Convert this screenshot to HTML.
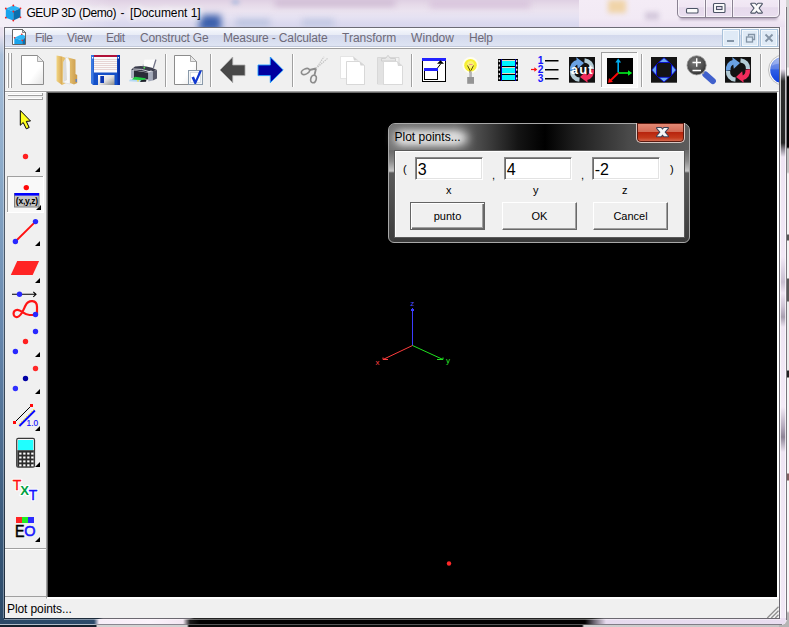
<!DOCTYPE html>
<html>
<head>
<meta charset="utf-8">
<title>GEUP 3D (Demo) - [Document 1]</title>
<style>
html,body{margin:0;padding:0;}
body{width:789px;height:627px;overflow:hidden;position:relative;background:#000;font-family:"Liberation Sans",sans-serif;font-size:12px;color:#000;}
.abs{position:absolute;}
#bgtop{left:0;top:0;width:789px;height:28px;background:linear-gradient(180deg,#dfd0e3 0,#e6dae9 5px,#ebe3f0 11px,#e6e2f2 17px,#dcdaef 23px,#d8d6ec 28px);}
#bgtop2{left:579px;top:0;width:208px;height:28px;background:linear-gradient(180deg,#f4ecf6 0,#f2eaf5 18px,#eadff0 28px);}
#bgtop3{left:0;top:0;width:110px;height:28px;background:linear-gradient(90deg,#f3eef6 0,#f1ebf5 40px,rgba(241,235,245,0) 100%);}
#outR{left:786px;top:0;width:3px;height:627px;background:linear-gradient(180deg,#d4d4d4 0px,#d4d4d4 67px,#f0f0f0 68px,#f0f0f0 75px,#000 77px,#000 147px,#c4c4c4 149px,#c4c4c4 172px,#f4f4f4 174px,#f4f4f4 234px,#555 235px,#555 240px,#f4f4f4 241px,#f4f4f4 278px,#5a5a5a 279px,#5a5a5a 301px,#ececec 302px,#ececec 370px,#222 371px,#222 377px,#f6f6f6 378px,#f6f6f6 473px,#806060 474px,#806060 480px,#f8f8f8 481px,#f8f8f8 611px,#b4b4b4 613px,#b4b4b4 627px);}
#outB{left:0;top:625px;width:789px;height:2px;background:linear-gradient(90deg,#14202c 0,#14202c 96px,#d2d2d2 97px,#d2d2d2 187px,#0a0a0a 189px,#0a0a0a 582px,#cfcfcf 584px,#c4c4c4 100%);}
#lframe{left:0;top:27px;width:5px;height:598px;
 background:linear-gradient(180deg,#eae2ef 0px,#e6e0ee 8px,#a9c0da 28px,#8aa9c8 150px,#6586ac 310px,#3b5b7d 490px,#2a4866 598px);}
#lframe i{position:absolute;left:3px;top:0;width:1px;height:100%;background:rgba(255,255,255,.35);}
#lframe b{position:absolute;left:4px;top:0;width:1px;height:592px;background:linear-gradient(180deg,#6b6b74 0,#4a5868 40%,#1c2a3a 100%);}
#rframe{left:779px;top:27px;width:8px;height:598px;border-radius:0 0 6px 0;
 background:linear-gradient(180deg,#ede4f2 0,#ebe1f1 42px,#8a8590 48px,#2e2e2e 54px,#262626 116px,#8a8590 122px,#eee4f3 130px,#f1e8f5 230px,#d8cfe0 245px,#c8bed0 255px,#efe6f4 266px,#cdc2d4 280px,#a89fb0 290px,#eee5f3 300px,#f3eaf6 380px,#b4aabd 400px,#8d8496 410px,#eee5f3 425px,#f1e8f5 100%);}
#rframe i{position:absolute;left:0;top:0;width:1px;height:592px;background:#6b6870;}
#rframe b{position:absolute;left:1px;top:0;width:1px;height:592px;background:rgba(255,255,255,.75);}
#rframe u{position:absolute;left:6px;top:0;width:1px;height:594px;background:rgba(255,255,255,.7);}
#rframe s{position:absolute;left:7px;top:0;width:1px;height:593px;background:#77747c;}
#bframe{left:0;top:618px;width:786px;height:7px;border-radius:0 0 6px 0;
 background:linear-gradient(90deg,#2a4866 0,#2c4a6a 94px,#f6ecf7 99px,#fbf2fb 150px,#f3e6f2 183px,#1a1a1a 190px,#000 200px,#000 585px,#6a6470 594px,#e6daee 606px,#e9ddf0 100%);}
#bframe i{position:absolute;left:4px;top:0;width:776px;height:1px;background:linear-gradient(90deg,#1c2a3a 0,#1c2a3a 94px,#6b6870 99px,#6b6870 186px,#222 190px,#222 588px,#6b6870 600px,#6b6870 100%);}
#bframe b{position:absolute;left:4px;top:1px;width:777px;height:1px;background:rgba(255,255,255,.4);}
#bframe u{position:absolute;left:0;top:6px;width:782px;height:1px;background:linear-gradient(90deg,#b0bcc8 0,#b0bcc8 94px,#8a8690 99px,#8a8690 186px,#555 190px,#555 588px,#807c86 600px,#807c86 100%);}
.smudge{position:absolute;filter:blur(3px);}
#title{left:26.400px;top:5px;font-size:12px;line-height:16px;letter-spacing:-.11px;white-space:nowrap;color:#000;text-shadow:0 0 6px #fff,0 0 8px #fff,0 0 10px #fff;}
#client{left:5px;top:28px;width:774px;height:590px;background:#f0f0f0;}
#ctop{left:4px;top:27px;width:776px;height:1px;background:#6b6b74;}
#menubar{left:5px;top:28px;width:774px;height:19px;background:linear-gradient(180deg,#fdfdfe 0,#f0f3fa 3px,#e8ecf6 7px,#d3d9ed 7.500px,#d9dff0 13px,#dee4f3 18px,#c2c9da 18px,#c2c9da 19px);}
.mi{position:absolute;top:31px;font-size:12px;line-height:14px;color:#6e6a78;white-space:nowrap;}
#tbsep{left:5px;top:47px;width:774px;height:2px;background:#fff;border-bottom:1px solid #a0a0a0;box-sizing:border-box;}
#toolbar{left:5px;top:49px;width:774px;height:42px;background:#f0f0f0;}
#canvas{left:48px;top:93px;width:729px;height:504px;background:#000;}
#mdiedge{left:46px;top:91px;width:733px;height:508px;box-sizing:border-box;border:1px solid;border-color:#a0a0a0 #fff #fff #a0a0a0;background:#696969;box-shadow:inset -1px -1px 0 #fff;}
#status{left:5px;top:599px;width:774px;height:19px;background:#f0f0f0;}
#statustxt{left:7px;top:602px;font-size:12px;line-height:14px;letter-spacing:-.1px;white-space:nowrap;}
#lefttb{left:5px;top:92px;width:41px;height:505px;background:#f0f0f0;}

#dlg{left:388px;top:123px;width:302px;height:120px;border-radius:7px 7px 6px 6px;box-sizing:border-box;border:1px solid #a8a8a8;overflow:hidden;
 background:linear-gradient(180deg,#6c6c6c 0,#6a6a6a 27px,#8a8a8a 37px,#c6c6c6 47px,#5a5a5a 49px,#3c3c3c 100%);box-shadow:0 0 0 1px #000;}
#dlgtb{left:389px;top:124px;width:300px;height:26px;border-radius:6px 6px 0 0;background:linear-gradient(90deg,#747474 0,#6a6a6a 22%,#3a3a3a 34%,#141414 43%,#000 52%,#1e1e1e 62%,#4a4a4a 80%,#5c5c5c 100%);}
#dlgbot{left:394px;top:238px;width:291px;height:4px;background:#3a3a3a;}
#dlgglow{left:394px;top:131px;width:74px;height:14px;background:#e0e0e0;filter:blur(5px);border-radius:7px;}
#dlgglow2{left:398px;top:133px;width:62px;height:10px;background:#dcdcdc;filter:blur(3px);border-radius:5px;}
#dlgtitle{left:394.500px;top:129px;font-size:12px;line-height:16px;letter-spacing:.01px;white-space:nowrap;}
#dlgclose{left:636px;top:123px;width:49px;height:20px;box-sizing:border-box;border:1px solid #d8c8c4;border-top:none;border-radius:0 0 5px 5px;
 background:linear-gradient(180deg,#e48c78 0,#d26a54 47%,#b8250e 50%,#c43a1c 78%,#d8735a 100%);box-shadow:inset 0 0 0 1px #5a1a10;}
#dlgclient{left:394px;top:150px;width:291px;height:88px;box-sizing:border-box;border:1px solid #5a5a5a;background:#f0f0f0;box-shadow:inset 1px 1px 0 #fff;}
.edit{position:absolute;top:157px;width:68px;height:23px;box-sizing:border-box;background:#fff;border:1px solid;border-color:#8a8a8a #fff #fff #8a8a8a;box-shadow:inset 1px 1px 0 #6a6a6a,inset -1px -1px 0 #e3e3e3;font-size:16px;line-height:19px;padding:2px 0 0 1.700px;}
.dl{position:absolute;font-size:11px;line-height:12px;white-space:nowrap;}
.btn{position:absolute;top:202px;width:75px;height:28px;box-sizing:border-box;background:#f0f0f0;border:1px solid;border-color:#fff #696969 #696969 #fff;box-shadow:inset -1px -1px 0 #a0a0a0;font-size:11px;line-height:27px;text-align:center;}
.btn.def{top:202px;height:28px;border-color:#646464;box-shadow:inset 1px 1px 0 #fff,inset -1px -1px 0 #696969,inset -2px -2px 0 #a0a0a0;line-height:27px;}
</style>
</head>
<body>
<div class="abs" id="bgtop"></div>
<div class="abs" id="bgtop2"></div>
<div class="abs" id="bgtop3"></div>
<div class="smudge" style="left:199px;top:15px;width:22px;height:16px;background:#3c60ac;filter:blur(3.500px)"></div>
<div class="smudge" style="left:236px;top:19px;width:34px;height:8px;background:#bcc4e0"></div>
<div class="smudge" style="left:302px;top:19px;width:32px;height:8px;background:#c2c8e2"></div>
<div class="smudge" style="left:275px;top:0px;width:120px;height:6px;background:#cdb8d2"></div>
<div class="smudge" style="left:430px;top:0px;width:100px;height:8px;background:#d8c4dc"></div>
<div class="smudge" style="left:232px;top:0px;width:7px;height:4px;background:#a8b8dc;filter:blur(2px)"></div>
<div class="smudge" style="left:608px;top:0px;width:18px;height:13px;background:#f0d4a8;filter:blur(2.500px)"></div>
<div class="smudge" style="left:645px;top:12px;width:14px;height:8px;background:#d4c8dc;filter:blur(2.500px)"></div>
<div class="abs" id="outR"></div>
<div class="abs" id="outB"></div>
<div class="abs" style="left:779px;top:617px;width:10px;height:10px;background:#b4b4b4"></div>
<div class="abs" style="left:785px;top:7px;width:1px;height:20px;background:rgba(255,255,255,.7)"></div><div class="abs" style="left:786px;top:7px;width:1px;height:20px;background:#77747c"></div>
<div class="abs" id="lframe"><i></i><b></b></div>
<div class="abs" id="rframe"><i></i><b></b><u></u><s></s></div>
<div class="abs" id="bframe"><i></i><b></b><u></u></div>
<div class="abs" id="title"><span id="t1" style="letter-spacing:-.44px">GEUP 3D (Demo)</span><span id="t2" style="letter-spacing:1.050px"> - </span><span id="t3" style="letter-spacing:-.06px">[Document 1]</span></div>
<div class="abs" id="client"></div>
<div class="abs" id="ctop"></div>
<div class="abs" id="menubar"></div>
<div class="mi" style="left:35px;letter-spacing:-.5px">File</div>
<div class="mi" style="left:67px;letter-spacing:-.27px">View</div>
<div class="mi" style="left:106px;letter-spacing:-.57px">Edit</div>
<div class="mi" style="left:140px;letter-spacing:-.19px">Construct Ge</div>
<div class="mi" style="left:223px;letter-spacing:-.15px">Measure - Calculate</div>
<div class="mi" style="left:342px">Transform</div>
<div class="mi" style="left:411px;letter-spacing:.07px">Window</div>
<div class="mi" style="left:469px;letter-spacing:-.25px">Help</div>
<svg class="abs" id="topicons" style="left:0;top:0" width="789" height="48" viewBox="0 0 789 48">
<defs>
<linearGradient id="gCap" x1="0" y1="0" x2="0" y2="1"><stop offset="0" stop-color="#f3ebf6"/><stop offset=".45" stop-color="#efe5f3"/><stop offset=".5" stop-color="#e6daec"/><stop offset="1" stop-color="#eadff0"/></linearGradient>
<filter id="fb" x="-20%" y="-50%" width="140%" height="200%"><feGaussianBlur stdDeviation="1.600"/></filter>
</defs>
<!-- app cube -->
<path d="M13.300 5.500 L20.500 8.300 L13.300 11.500 L5.800 8.500 Z" fill="#2cb6f6"/>
<path d="M5.800 8.500 L13.300 11.500 V20.500 L5.800 17.700 Z" fill="#1aa4ec"/>
<path d="M13.300 11.500 L20.500 8.300 V17.300 L13.300 20.500 Z" fill="#0a6eae"/>
<g fill="#f02020"><circle cx="13.300" cy="5.500" r=".9"/><circle cx="5.800" cy="8.500" r=".9"/><circle cx="20.500" cy="8.300" r=".9"/><circle cx="13.300" cy="11.500" r=".9"/><circle cx="5.800" cy="17.700" r=".9"/><circle cx="20.500" cy="17.300" r=".9"/><circle cx="13.300" cy="20.500" r=".9"/></g>
<!-- mdi doc icon -->
<path d="M12.500 29.500 H22.500 L25.500 32.500 V44.500 H12.500 Z" fill="#fff" stroke="#555" stroke-width=".9" stroke-linejoin="miter"/>
<path d="M22.500 29.500 V32.500 H25.500 Z" fill="#dcdcdc" stroke="#555" stroke-width=".7"/>
<path d="M14.300 37.800 L21.800 34.300 L25 35.800 V37.500 L22.200 40.400 Z" fill="#2cb6f6"/>
<path d="M14.300 37.800 L22.200 40.400 V44 H14.300 Z" fill="#1aa4ec"/>
<path d="M22.200 40.400 L25 37.500 V44 H22.200 Z" fill="#0a6eae"/>
<g fill="#f02020"><circle cx="21.800" cy="34.300" r=".8"/><circle cx="14.600" cy="37.800" r=".8"/><circle cx="22.200" cy="40.400" r=".8"/></g>
<!-- caption buttons shadow -->
<path d="M680 15 H777 V19.500 H680 Z" fill="#8e7c9a" opacity=".7" filter="url(#fb)"/>
<path d="M677.500 -2 V13 Q677.500 17.500 682 17.500 H775 Q779.500 17.500 779.500 13 V-2 Z" fill="url(#gCap)" stroke="#8a8292" stroke-width="1"/>
<path d="M678.500 -2 V13 Q678.500 16.500 682 16.500 H775 Q778.500 16.500 778.500 13 V-2" fill="none" stroke="#fff" stroke-opacity=".6" stroke-width="1"/>
<path d="M705.500 0 V17 M732.500 0 V17" stroke="#8a8292" stroke-width="1"/>
<path d="M704.500 0 V16 M706.500 0 V16 M731.500 0 V16 M733.500 0 V16" stroke="#fff" stroke-opacity=".55" stroke-width="1"/>
<!-- min -->
<rect x="686.500" y="8.500" width="11.500" height="4.500" rx="1" fill="#fbfbfb" stroke="#4c5466" stroke-width="1.100"/>
<!-- max -->
<rect x="713.500" y="3.500" width="11.500" height="9" rx="1" fill="#fbfbfb" stroke="#4c5466" stroke-width="1.100"/>
<rect x="716.500" y="6.500" width="5.500" height="3" fill="#e6dcee" stroke="#4c5466" stroke-width="1.100"/>
<!-- close -->
<g stroke="#4c5466" stroke-width="2.200" stroke-linejoin="round" fill="#4c5466"><path d="M751.300 3.800 H755 L761.800 12.600 H758.100 Z"/><path d="M761.800 3.800 H758.100 L751.300 12.600 H755 Z"/></g>
<g fill="#fbfbfb"><path d="M751.300 3.800 H755 L761.800 12.600 H758.100 Z"/><path d="M761.800 3.800 H758.100 L751.300 12.600 H755 Z"/></g>
<!-- MDI buttons -->
<g>
<rect x="722.500" y="29.500" width="17" height="17" fill="#dfeaf6" stroke="#a9c2da"/><rect x="741.500" y="29.500" width="17" height="17" fill="#dfeaf6" stroke="#a9c2da"/><rect x="760.500" y="29.500" width="17" height="17" fill="#dfeaf6" stroke="#a9c2da"/>
<rect x="723.500" y="30.500" width="15" height="15" fill="none" stroke="#f4f8fc"/><rect x="742.500" y="30.500" width="15" height="15" fill="none" stroke="#f4f8fc"/><rect x="761.500" y="30.500" width="15" height="15" fill="none" stroke="#f4f8fc"/>
<rect x="727" y="40" width="7" height="2" fill="#8494a6"/>
<path d="M748.500 36.500 V34.500 H754.500 V39.500 H752.500" fill="none" stroke="#8494a6" stroke-width="1.300"/>
<rect x="746.500" y="37" width="6" height="5" fill="none" stroke="#8494a6" stroke-width="1.300"/>
<path d="M765.500 34.500 L772.500 41.500 M772.500 34.500 L765.500 41.500" stroke="#8494a6" stroke-width="1.800"/>
</g>
</svg>
<div class="abs" id="tbsep"></div>
<div class="abs" id="toolbar"></div>
<svg class="abs" id="tbicons" style="left:0;top:49px" width="779" height="43" viewBox="0 49 779 43">
<defs>
<linearGradient id="gPaper" x1="0" y1="0" x2="1" y2="1"><stop offset="0" stop-color="#fff"/><stop offset=".6" stop-color="#fff"/><stop offset="1" stop-color="#e4e4e4"/></linearGradient>
<linearGradient id="gFold" x1="0" y1="0" x2="1" y2="0"><stop offset="0" stop-color="#f2d684"/><stop offset="1" stop-color="#d9a954"/></linearGradient>
<linearGradient id="gFold2" x1="0" y1="0" x2="1" y2="0"><stop offset="0" stop-color="#e9c472"/><stop offset="1" stop-color="#c99a4c"/></linearGradient>
<linearGradient id="gShut" x1="0" y1="0" x2="1" y2="1"><stop offset="0" stop-color="#fff"/><stop offset=".5" stop-color="#e0e0e0"/><stop offset="1" stop-color="#8a8a8a"/></linearGradient>
<radialGradient id="gLens" cx=".4" cy=".35" r=".7"><stop offset="0" stop-color="#7a7a7a"/><stop offset=".7" stop-color="#4a4a4a"/><stop offset="1" stop-color="#2a2a2a"/></radialGradient>
<linearGradient id="gSph" x1="0" y1="0" x2="0" y2="1"><stop offset="0" stop-color="#8aa4ec"/><stop offset=".45" stop-color="#5a7ee6"/><stop offset=".5" stop-color="#2f5fe4"/><stop offset="1" stop-color="#0a3ce0"/></linearGradient>
</defs>
<!-- grip -->
<g shape-rendering="crispEdges">
<rect x="7" y="53" width="1" height="35" fill="#fff"/><rect x="8" y="53" width="1" height="35" fill="#a0a0a0"/>
<rect x="10" y="53" width="1" height="35" fill="#fff"/><rect x="11" y="53" width="1" height="35" fill="#a0a0a0"/>
<!-- separators -->
<g fill="#a0a0a0"><rect x="165" y="54" width="1" height="33"/><rect x="210" y="54" width="1" height="33"/><rect x="292" y="54" width="1" height="33"/><rect x="411" y="54" width="1" height="33"/><rect x="641" y="54" width="1" height="33"/><rect x="760" y="54" width="1" height="33"/></g>
<g fill="#fff"><rect x="166" y="54" width="1" height="33"/><rect x="211" y="54" width="1" height="33"/><rect x="293" y="54" width="1" height="33"/><rect x="412" y="54" width="1" height="33"/><rect x="642" y="54" width="1" height="33"/><rect x="761" y="54" width="1" height="33"/></g>
</g>
<!-- new doc -->
<path d="M21.5 55.5 H37.5 L43.5 61.5 V84.5 H21.5 Z" fill="url(#gPaper)" stroke="#8c8c8c" stroke-width="1"/>
<path d="M37.5 55.5 V61.5 H43.5 Z" fill="#e8e8e8" stroke="#9a9a9a" stroke-width=".8"/>
<!-- folder -->
<path d="M56.5 55.5 L62 56.5 L62 85 L56.5 81 Z" fill="url(#gFold)"/>
<path d="M62 56.5 L66 58 V83 L62 85 Z" fill="#e6c06c"/>
<path d="M63.500 62 L66.500 57 L70 60.500 V84 L63 82.500 Z" fill="#f8f8f8" stroke="#d0d0d0" stroke-width=".5"/>
<path d="M63.5 62 L66 58 L67 80 L63.5 82 Z" fill="#dcdcdc"/>
<path d="M68 57.5 L75.5 59.5 V74 L77.2 75 V83 L74 84.5 L70 83 V62 Z" fill="url(#gFold2)"/>
<rect x="75.6" y="79" width="1.2" height="3" fill="#4a7ae0"/>
<!-- floppy -->
<path d="M91 55 H120 V85 H93 L91 83 Z" fill="#1450c8"/>
<path d="M91 55 H93.5 V84.5 L91 83 Z" fill="#3a78e0"/>
<rect x="117.500" y="55" width="2.5" height="30" fill="#0a34a8"/>
<rect x="94" y="55" width="23" height="17.500" fill="#fafafa"/>
<rect x="94" y="55" width="23" height="2" fill="#b01038"/>
<g stroke="#e2cccc" stroke-width=".8"><path d="M94 59.500H117M94 61.500H117M94 63.500H117M94 65.500H117M94 67.500H117M94 69.500H117"/></g>
<rect x="92" y="57" width="1.300" height="1.500" fill="#fff"/><rect x="117.700" y="57" width="1.300" height="1.500" fill="#fff"/>
<rect x="98" y="75" width="16.500" height="10" fill="url(#gShut)"/>
<rect x="100.300" y="76" width="3.700" height="7" fill="#0a34b0"/>
<!-- printer -->
<path d="M143.500 67 L144.300 59.700 L155 59.500 L153.800 68 Z" fill="#fdfdfd"/>
<path d="M155.800 60 L153.500 67.500" stroke="#74768a" stroke-width="1.300" stroke-linecap="round"/>
<path d="M143.200 66.800 V64.500" stroke="#9a9cb0" stroke-width=".8"/>
<path d="M131 69.800 L135 66.600 Q143 65 152 67.800 L157 70 L149 72.500 Z" fill="#3a3c4c"/>
<path d="M133 69 Q142 68.500 149 71.500" stroke="#d8dae2" stroke-width=".9" fill="none"/>
<path d="M131 69.800 L134 70.600 V78.500 L131 78 Z" fill="#aab0be"/>
<path d="M134 70.600 L148.500 72.800 V79.500 L134 78.500 Z" fill="#2a2c38"/>
<path d="M148.300 72.500 L152.800 71.300 V80.500 L148.300 81.500 Z" fill="#a4aaba"/>
<path d="M152.800 71.300 L157 70 V78.500 L152.800 80.500 Z" fill="#565868"/>
<path d="M148.300 72.500 L152.800 71.300 L151 70.500 L147 71.800 Z" fill="#e8eaf0"/>
<path d="M135 76.800 L146 78.200 L143.500 81 L131.500 79.800 Z" fill="#22cc44"/>
<path d="M130 79.300 L141 80.300 L140 82 L129 81.200 Z" fill="#b4d8f4"/>
<path d="M141 80.300 L146.500 79.500 L146 81.800 L140 82 Z" fill="#1c1e28"/>
<circle cx="138" cy="80.700" r="1" fill="#e8e060"/>
<circle cx="144.300" cy="67.700" r=".9" fill="#50e850"/>
<!-- doc + check -->
<path d="M174.500 55.500 H190.500 L196.500 61.500 V84.500 H174.500 Z" fill="url(#gPaper)" stroke="#8c8c8c"/>
<path d="M190.500 55.500 V61.500 H196.500 Z" fill="#e8e8e8" stroke="#9a9a9a" stroke-width=".8"/>
<rect x="188.500" y="70.500" width="14" height="14" fill="#f4f6f8" stroke="#8a9aaa"/>
<rect x="190.500" y="72.500" width="10" height="10" fill="#fff" stroke="#d0d8e0" stroke-width=".8"/>
<path d="M191.500 77.500 L194 76.500 L195.500 80 L199.500 70.500 L202 70.500 L196 84 L194.500 84 Z" fill="#1038d0"/>
<!-- back arrow -->
<path d="M220 70 L232.700 57 V65 H245 V75.600 H232.700 V82.700 Z" fill="#484848" stroke="#a8a8a8" stroke-width=".8"/>
<!-- forward arrow -->
<path d="M283.200 70 L270.300 57 V65 H258 V75.600 H270.300 V82.700 Z" fill="#0000a0" stroke="#1e9cff" stroke-width=".9"/>
<!-- scissors -->
<g fill="none" stroke="#8c8c8c">
<ellipse cx="305.500" cy="71.500" rx="4.300" ry="2.600" transform="rotate(-25 305.500 71.500)" stroke-width="1.600"/>
<ellipse cx="313.500" cy="79" rx="2.700" ry="3.800" transform="rotate(15 313.500 79)" stroke-width="1.600"/>
<path d="M309.500 70 L316 68.500 M314.500 75 L316 68.500" stroke-width="1.800"/>
<path d="M316 68.500 L324 56.800 M316 68.500 L327.500 58.500" stroke="#c4c4c4" stroke-width="1.100" stroke-dasharray="1.500 .8"/>
</g>
<!-- copy -->
<path d="M340.500 56.500 H353 L358 60.500 V78.500 H340.500 Z" fill="#fff" stroke="#dcdcdc" stroke-width=".7"/>
<path d="M346.500 61.500 H359.500 L364.500 65.500 V84.500 H346.500 Z" fill="#fff" stroke="#cfcfcf" stroke-width=".8"/>
<path d="M353 56.500 L358 60.500 H354 Z M359.500 61.500 L364.500 65.500 H360.500Z" fill="#d4d4d4"/>
<!-- paste -->
<path d="M377.500 57.500 H399 V84 H377.500 Z" fill="#f2f2f2" stroke="#d2d2d2" stroke-width=".8"/>
<rect x="378" y="58" width="5" height="25.500" fill="#e2e2e2"/>
<path d="M381.500 61 V58.500 H385.500 L388 55.300 L390.500 58.500 H395.500 V61 Z" fill="#e8e8e8" stroke="#c8c8c8" stroke-width=".8"/>
<path d="M383.500 61.500 H397 L402.500 66 V84.500 H383.500 Z" fill="#fff" stroke="#d2d2d2" stroke-width=".8"/>
<path d="M397 61.500 L402.500 66 H398 Z" fill="#d8d8d8"/>
<!-- window icon -->
<g shape-rendering="crispEdges">
<rect x="422.500" y="58.500" width="23" height="23" fill="#fff" stroke="#000" stroke-width="1"/>
<rect x="422" y="58" width="24" height="3" fill="#2222ff"/>
<rect x="424.500" y="68.500" width="13" height="11" fill="#fff" stroke="#000"/>
<rect x="424" y="68" width="14" height="3" fill="#2222ff"/>
</g>
<path d="M437.500 68 L441 63.500" stroke="#000" stroke-width="1"/>
<path d="M437 63.800 L440.500 60.200 L444 63.800 Z" fill="#000"/>
<!-- bulb -->
<circle cx="470.500" cy="65.300" r="8.200" fill="#fffef0"/>
<circle cx="470.500" cy="65.300" r="6.300" fill="#f7ef34"/>
<circle cx="470.500" cy="64.500" r="3.500" fill="#fbf79a" opacity=".6"/>
<path d="M467.500 65.500 L470 70.500 V73 M473.500 65.500 L471 70.500" stroke="#504000" stroke-width=".9" fill="none"/>
<path d="M469 64.500 H472.500" stroke="#f09090" stroke-width="1"/>
<rect x="469.300" y="71.500" width="2.600" height="6" fill="#b4b4b4"/>
<rect x="467.200" y="77" width="6.800" height="6.800" fill="#949494"/>
<!-- film -->
<g shape-rendering="crispEdges">
<rect x="498" y="59" width="20" height="22" fill="#000"/>
<rect x="501" y="60" width="14" height="20" fill="#e8d8c4"/>
<rect x="501" y="60.500" width="14" height="5" fill="#00f6ff"/><rect x="501" y="67.500" width="14" height="5.500" fill="#00f6ff"/><rect x="501" y="75" width="14" height="5" fill="#00f6ff"/>
<rect x="501" y="66" width="14" height="1" fill="#000"/><rect x="501" y="73.500" width="14" height="1" fill="#000"/>
<rect x="500.500" y="59" width="1" height="22" fill="#0000c0"/><rect x="514.500" y="59" width="1" height="22" fill="#0000c0"/>
</g>
<g fill="#fff"><rect x="498.700" y="60" width="1.200" height="2.200" rx=".6"/><rect x="498.700" y="64.300" width="1.200" height="2.200" rx=".6"/><rect x="498.700" y="68.600" width="1.200" height="2.200" rx=".6"/><rect x="498.700" y="72.900" width="1.200" height="2.200" rx=".6"/><rect x="498.700" y="77.200" width="1.200" height="2.200" rx=".6"/>
<rect x="516.100" y="60" width="1.200" height="2.200" rx=".6"/><rect x="516.100" y="64.300" width="1.200" height="2.200" rx=".6"/><rect x="516.100" y="68.600" width="1.200" height="2.200" rx=".6"/><rect x="516.100" y="72.900" width="1.200" height="2.200" rx=".6"/><rect x="516.100" y="77.200" width="1.200" height="2.200" rx=".6"/></g>
<!-- 123 list -->
<g font-family="Liberation Sans, sans-serif" font-weight="bold" font-size="10.200px" fill="#1414ff">
<text x="537.800" y="64.400">1</text><text x="537.800" y="73.400">2</text><text x="537.800" y="82.400">3</text></g>
<g stroke="#000" stroke-width="1.400"><path d="M545 60.700 H558.500 M545 69.700 H558.500 M545 78.700 H558.500"/></g>
<path d="M531 69.500 H536" stroke="#ff1010" stroke-width="1.200"/><path d="M534.300 67.300 L537.300 69.500 L534.300 71.700 Z" fill="#ff1010"/>
<!-- aut icon -->
<rect x="569" y="57" width="26" height="25.700" fill="#121212"/>
<g id="cyc" fill="none" stroke-linecap="butt">
<path d="M584.500 60.300 C589.500 60.800 592.200 64.500 592 69" stroke="#b4ccd6" stroke-width="4.200"/>
<path d="M579.500 79.700 C574.500 79.200 571.800 75.500 572 71" stroke="#b4ccd6" stroke-width="4.200"/>
<path d="M572.300 70.500 C571.800 66 574 62.700 578 62" stroke="#6aa2e4" stroke-width="4.600"/>
<path d="M576.300 57.300 L584 63 L577.800 68.800 Z" fill="#6aa2e4" stroke="none"/>
<path d="M591.700 69.500 C592.200 74 590 77.300 586 78" stroke="#f02c5c" stroke-width="4.600"/>
<path d="M587.700 82.700 L580 77 L586.200 71.200 Z" fill="#f02c5c" stroke="none"/>
</g>
<text x="570.800" y="73.700" font-family="Liberation Sans, sans-serif" font-weight="bold" font-size="13px" fill="#fff" letter-spacing="1.100">aut</text>
<!-- axes pressed button -->
<rect x="601" y="52" width="37" height="36" fill="#f9f9f9"/>
<g shape-rendering="crispEdges"><rect x="601" y="52" width="37" height="1" fill="#a0a0a0"/><rect x="601" y="52" width="1" height="36" fill="#a0a0a0"/><rect x="601" y="87" width="37" height="1" fill="#fff"/><rect x="637" y="52" width="1" height="36" fill="#fff"/>
<rect x="607" y="58" width="26" height="25.700" fill="#000"/></g>
<path d="M618.200 72.500 V61" stroke="#00aef0" stroke-width="1.600"/><path d="M615.300 62.500 L618.200 58.500 L621.100 62.500 Z" fill="#00aef0"/>
<path d="M618 73 H629" stroke="#00f020" stroke-width="1.600"/><path d="M628 70.200 L632.200 73 L628 75.800 Z" fill="#00f020"/>
<path d="M618.200 73 L610.500 80.500" stroke="#ff0808" stroke-width="1.800"/><path d="M608 82.800 L609 78 L613 82 Z" fill="#ff0808"/>
<!-- blue arrows icon -->
<rect x="651" y="57" width="26" height="25.700" fill="#141414"/>
<g fill="#6aa8f0" stroke="#0000e0" stroke-width=".8">
<path d="M664 57.800 L669.500 62.500 H658.500 Z"/><path d="M664 82 L669.500 77.300 H658.500 Z"/>
<path d="M651.800 70 L656.500 64.500 V75.500 Z"/><path d="M676.200 70 L671.500 64.500 V75.500 Z"/>
</g>
<path d="M658.500 62.500 L656.500 64.500 M669.500 62.500 L671.500 64.500 M658.500 77.300 L656.500 75.500 M669.500 77.300 L671.500 75.500" stroke="#0000e0" stroke-width=".8"/>
<!-- zoom -->
<path d="M705.500 74.500 L712.800 81" stroke="#4060cc" stroke-width="6.200" stroke-linecap="round"/>
<path d="M700 70 L704 73.500" stroke="#a0a0a0" stroke-width="2"/>
<circle cx="696.600" cy="65.300" r="9.600" fill="url(#gLens)" stroke="#9a9a9a" stroke-width=".8"/>
<path d="M692.500 62.500 H701 M696.700 58.300 V66.700 M692.500 70.500 H701" stroke="#fff" stroke-width="1.400"/>
<!-- refresh icon -->
<rect x="725" y="57" width="26" height="25.700" fill="#121212"/>
<use href="#cyc" x="156" y="0"/>
<!-- sphere -->
<circle cx="783.500" cy="70" r="15" fill="#fafafa" stroke="#b0b0b0" stroke-width=".8"/><circle cx="783.500" cy="70" r="13.300" fill="url(#gSph)"/><path d="M771.500 66 A13 13 0 0 1 783 57.500 L783 63 Q775 64 771.500 66 Z" fill="#fff" opacity=".25"/>
</svg>
<div class="abs" style="left:5px;top:90px;width:774px;height:1px;background:#f8f8f8"></div>
<div class="abs" id="lefttb"></div>
<div class="abs" id="mdiedge"></div>
<div class="abs" id="canvas"></div>
<svg class="abs" id="ltbicons" style="left:5px;top:91px" width="43" height="507" viewBox="5 91 43 507">
<g shape-rendering="crispEdges">
<rect x="5" y="91" width="42" height="1" fill="#a0a0a0"/><rect x="5" y="92" width="42" height="1" fill="#fff"/>
<rect x="46" y="92" width="1" height="505" fill="#a0a0a0"/><rect x="47" y="92" width="1" height="505" fill="#696969"/>
<rect x="8" y="94" width="34" height="1" fill="#fff"/><rect x="8" y="95" width="35" height="1" fill="#a0a0a0"/><rect x="42" y="93" width="1" height="3" fill="#a0a0a0"/>
<rect x="8" y="98" width="34" height="1" fill="#fff"/><rect x="8" y="99" width="35" height="1" fill="#a0a0a0"/><rect x="42" y="97" width="1" height="3" fill="#a0a0a0"/>
<rect x="5" y="548" width="41" height="1" fill="#a0a0a0"/><rect x="5" y="549" width="41" height="1" fill="#fff"/>
<rect x="5" y="596" width="42" height="1" fill="#a0a0a0"/>
<!-- pressed button -->
<rect x="7" y="176" width="37" height="37" fill="#f9f9f9"/>
<rect x="7" y="176" width="37" height="1" fill="#a0a0a0"/><rect x="7" y="176" width="1" height="37" fill="#a0a0a0"/><rect x="7" y="212" width="37" height="1" fill="#fff"/><rect x="43" y="176" width="1" height="37" fill="#fff"/>
</g>
<!-- cursor -->
<path d="M20.300 110.500 V125.300 L23.200 122.500 L26.300 128.800 L29.200 127.500 L26.300 121.400 L30.500 121 Z" fill="#ffff20" stroke="#000" stroke-width="1" stroke-linejoin="miter"/>
<!-- dropdown triangles -->
<g fill="#000"><path d="M35 172 H40 V167 Z"/><path d="M36 210 H41 V205 Z"/><path d="M35 246 H40 V241 Z"/><path d="M35 283 H40 V278 Z"/><path d="M35 357 H40 V352 Z"/><path d="M35 394 H40 V389 Z"/><path d="M35 431 H40 V426 Z"/><path d="M35 467 H40 V462 Z"/><path d="M35 542 H40 V537 Z"/></g>
<!-- point -->
<circle cx="25.500" cy="156.500" r="2.700" fill="#ff2020"/>
<!-- xyz -->
<circle cx="26.300" cy="187.600" r="2.700" fill="#ff0808"/>
<rect x="14.500" y="193.500" width="24.500" height="13.500" fill="#c4c4c4" stroke="#808080" stroke-width="1"/>
<rect x="14.500" y="193" width="24.500" height="2.600" fill="#0000ff"/>
<text x="26.800" y="204.300" text-anchor="middle" font-family="Liberation Sans, sans-serif" font-weight="bold" font-size="8.500px" fill="#000" letter-spacing="-.2">(x,y,z)</text>
<!-- segment -->
<path d="M15.400 241.500 L35.500 221.600" stroke="#ff1010" stroke-width="1.900"/>
<circle cx="35.500" cy="221.600" r="2.700" fill="#2828ff"/><circle cx="15.400" cy="241.500" r="2.700" fill="#2828ff"/>
<!-- parallelogram -->
<path d="M17.200 261 H39.100 L32.700 275 H10.800 Z" fill="#ff2424"/>
<!-- arrow with point -->
<path d="M12 294.300 H36 M33.300 291.800 L36 294.300 L33.300 296.800" stroke="#000" stroke-width="1.100" fill="none"/>
<circle cx="19.500" cy="294.300" r="2.700" fill="#2828ff"/>
<!-- loop curve -->
<path d="M35.500 315 L37 314 V307 C37 299.500 28.500 299.500 25.500 305.500 C23.500 309.500 21.500 316 17.500 317 C12.500 318 12 309.500 17.500 309.800 C21.500 310 24 314.800 29.500 315 H35.500" fill="none" stroke="#ff1414" stroke-width="2.200" stroke-linejoin="round"/>
<circle cx="35.500" cy="314.500" r="2.700" fill="#2828ff"/>
<!-- 3 points -->
<circle cx="35.500" cy="331.500" r="2.700" fill="#2828ff"/><circle cx="25.500" cy="341.500" r="2.700" fill="#ff2020"/><circle cx="15.400" cy="351.500" r="2.700" fill="#2828ff"/>
<circle cx="35.500" cy="368.500" r="2.700" fill="#ff2828"/><circle cx="25.500" cy="378.500" r="2.700" fill="#0000a4"/><circle cx="15.400" cy="388.500" r="2.700" fill="#3030ff"/>
<!-- measure -->
<path d="M31.500 405.500 L14.500 422.500" stroke="#000" stroke-width="1"/>
<rect x="30" y="404" width="3" height="3" fill="#ff0808"/><rect x="13" y="421" width="3" height="3" fill="#ff0808"/>
<path d="M34 409.500 L18.500 425" stroke="#f8f000" stroke-width="1.200" stroke-dasharray="1.200 1.200"/>
<path d="M34.900 410.500 L19.400 426" stroke="#0808ff" stroke-width="1.800"/>
<text x="26.600" y="426" font-family="Liberation Sans, sans-serif" font-size="8.300px" fill="#1010ff" stroke="#1010ff" stroke-width=".15">1.0</text>
<!-- calculator -->
<rect x="16.700" y="438.400" width="17.800" height="28.800" rx="1.500" fill="#f4f4f4" stroke="#383838" stroke-width="1.200"/>
<rect x="18" y="440" width="15.200" height="10.200" fill="#20ffff"/>
<rect x="17.300" y="450.200" width="16.600" height=".9" fill="#383838"/>
<rect x="17.400" y="451" width="16.400" height="15.800" fill="#2c2c2c"/>
<g fill="#fff">
<g id="krow"><rect x="19.200" y="452.600" width="2.300" height="2"/><rect x="23.200" y="452.600" width="2.300" height="2"/><rect x="27.200" y="452.600" width="2.300" height="2"/><rect x="31.200" y="452.600" width="2.300" height="2"/></g>
<use href="#krow" y="3.900"/><use href="#krow" y="7.800"/><use href="#krow" y="11.700"/>
</g>
<!-- TXT -->
<g font-family="Liberation Sans, sans-serif" font-size="14px" stroke="#fff" stroke-width="2.400" stroke-linejoin="round" fill="#fff">
<text x="12.800" y="490.200">T</text><text x="20.300" y="494.700" font-weight="bold" font-size="13px">X</text><text x="28.800" y="500.200">T</text></g>
<g font-family="Liberation Sans, sans-serif" font-size="14px">
<text x="12.800" y="490.200" fill="#ff1010" stroke="#ff1010" stroke-width=".4">T</text><text x="20.300" y="494.700" fill="#00a040" font-weight="bold" font-size="13px">X</text><text x="28.800" y="500.200" fill="#1010ff" stroke="#1010ff" stroke-width=".4">T</text></g>
<!-- EO -->
<g shape-rendering="crispEdges"><rect x="16" y="517" width="6" height="6" fill="#ff2424"/><rect x="22" y="517" width="6" height="6" fill="#20f020"/><rect x="28" y="517" width="6" height="6" fill="#2c2cff"/></g>
<g font-family="Liberation Sans, sans-serif" font-size="16.500px">
<text x="15" y="537.200" fill="#000" stroke="#000" stroke-width=".55" textLength="9.500" lengthAdjust="spacingAndGlyphs">E</text></g>
<text x="24.200" y="536.300" font-family="Liberation Sans, sans-serif" font-size="14.200px" fill="#1a1aff" stroke="#1a1aff" stroke-width=".55" textLength="11.300" lengthAdjust="spacingAndGlyphs">O</text>
</svg>

<svg class="abs" id="axes" style="left:48px;top:92px" width="729" height="505" viewBox="48 92 729 505">
<g fill="none" stroke-width="1" shape-rendering="crispEdges">
<path d="M412.5 345.5 L412.5 308.5" stroke="#3c3cff"/>
<path d="M410.5 311.5 L412.5 308.5 L414.5 311.5" stroke="#3c3cff"/>
</g>
<g fill="none" stroke-width="1">
<path d="M412.5 345.5 L383 359.5" stroke="#ff3c3c"/>
<path d="M383 357.5 V359.5 H388" stroke="#ff3c3c"/>
<path d="M412.5 345.5 L443 359.5" stroke="#20e020"/>
<path d="M437 359.5 H443 V357.5" stroke="#20e020"/>
</g>
<g font-family="Liberation Sans, sans-serif" font-size="8px">
<text x="410.3" y="305.5" fill="#4a4aff">z</text>
<text x="375.5" y="365" fill="#ff4040">x</text>
<text x="446" y="363.300" fill="#28e828">y</text>
</g>
<circle cx="449" cy="563.5" r="2.2" fill="#ff2828"/>
</svg>
<div class="abs" id="status"></div>
<svg class="abs" style="left:764px;top:604px" width="15" height="14" viewBox="764 604 15 14"><g stroke="#fafafa" stroke-width=".8"><path d="M768.500 618 L779 607.500 M772.500 618 L779 611.500 M776.500 618 L779 615.500"/></g><g stroke="#8e8e8e" stroke-width="1.300"><path d="M767.300 618 L778.500 606.800 M771.300 618 L778.500 610.800 M775.300 618 L778.500 614.800"/></g></svg>
<div class="abs" id="statustxt">Plot points...</div>

<div class="abs" id="dlg"></div>
<div class="abs" id="dlgtb"></div>
<div class="abs" id="dlgbot"></div>
<div class="abs" id="dlgglow"></div>
<div class="abs" id="dlgglow2"></div>
<div class="abs" id="dlgtitle">Plot points...</div>
<div class="abs" id="dlgclose"><svg width="47" height="19" viewBox="0 0 47 19" style="position:absolute;left:0;top:0"><g stroke="#3c4258" stroke-width="2" stroke-linejoin="round" fill="#3c4258"><path d="M20 5 H24 L31 13.300 H27 Z"/><path d="M31 5 H27 L20 13.300 H24 Z"/></g><g fill="#f6f6f6"><path d="M20 5 H24 L31 13.300 H27 Z"/><path d="M31 5 H27 L20 13.300 H24 Z"/></g></svg></div>
<div class="abs" id="dlgclient"></div>
<div class="dl" style="left:403px;top:163px">(</div>
<div class="edit" style="left:415px">3</div>
<div class="dl" style="left:492px;top:169px">,</div>
<div class="edit" style="left:504px">4</div>
<div class="dl" style="left:581px;top:169px">,</div>
<div class="edit" style="left:592px">-2</div>
<div class="dl" style="left:670px;top:163px">)</div>
<div class="dl" style="left:446px;top:184px">x</div>
<div class="dl" style="left:533px;top:184px">y</div>
<div class="dl" style="left:622px;top:184px">z</div>
<div class="btn def" style="left:410px">punto</div>
<div class="btn" style="left:502px">OK</div>
<div class="btn" style="left:593px">Cancel</div>
</body>
</html>
